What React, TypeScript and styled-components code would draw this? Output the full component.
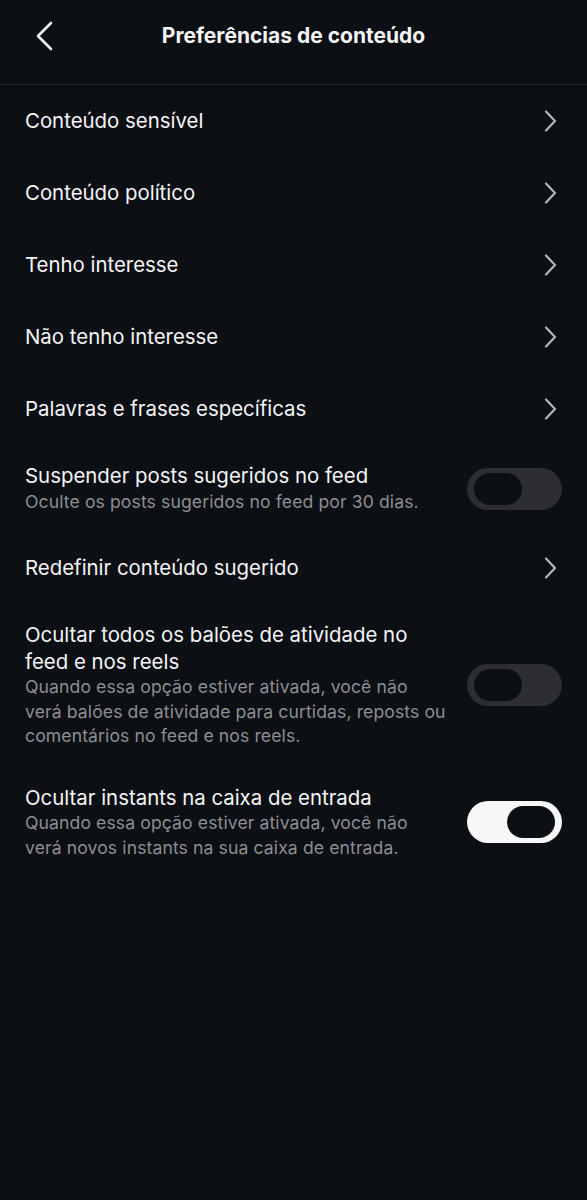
import React from "react";
import styled, { createGlobalStyle } from "styled-components";

const Global = createGlobalStyle`
  html, body { margin: 0; padding: 0; background: #0c0f14; }
  body { font-family: Inter, "Noto Sans", sans-serif; -webkit-font-smoothing: antialiased; }
`;

const Page = styled.div`
  width: 587px;
  min-height: 1200px;
  background: #0c0f14;
  color: #f5f5f7;
`;

const Header = styled.header`
  height: 85px;
  box-sizing: border-box;
  border-bottom: 1px solid #1f2228;
  display: grid;
  grid-template-columns: 80px 1fr 80px;
  align-items: start;
`;

const BackButton = styled.button`
  background: none;
  border: none;
  padding: 0;
  margin: 20px 0 0 32px;
  width: 24px;
  height: 32px;
  display: flex;
  align-items: center;
  justify-content: center;
  cursor: pointer;
`;

const Title = styled.h1`
  margin: 0;
  padding-top: 23px;
  text-align: center;
  font-size: 21px;
  line-height: 26px;
  font-weight: 700;
  letter-spacing: 0;
  color: #f5f5f7;
`;

const List = styled.div`
  display: flex;
  flex-direction: column;
`;

const Row = styled.div`
  min-height: 72px;
  box-sizing: border-box;
  padding: 18px 25px 18px 25px;
  display: flex;
  align-items: center;
  gap: 18px;
`;

const TextCol = styled.div`
  flex: 1;
  min-width: 0;
  display: flex;
  flex-direction: column;
`;

const Label = styled.div`
  font-size: 20.4px;
  line-height: 26.5px;
  color: #f5f5f7;
  letter-spacing: 0;
`;

const Sub = styled.div`
  font-size: 17.6px;
  line-height: 24.5px;
  color: #8d8e93;
  letter-spacing: 0.1px;
`;

const Track = styled.div<{ $on: boolean }>`
  flex: none;
  width: 95px;
  height: 42px;
  border-radius: 21px;
  background: ${(p) => (p.$on ? "#f7f7f7" : "#2c2e33")};
  display: flex;
  align-items: center;
  justify-content: ${(p) => (p.$on ? "flex-end" : "flex-start")};
  padding: 0 7px;
  box-sizing: border-box;
`;

const Knob = styled.div`
  width: 48px;
  height: 32px;
  border-radius: 16px;
  background: #0c0f14;
`;

const Chevron = () => (
  <svg width="16" height="24" viewBox="0 0 16 24" style={{ flex: "none", marginRight: 4 }}>
    <path d="M4 2.5 L13 12 L4 21.5" fill="none" stroke="#b4b5ba" strokeWidth="2.2" strokeLinecap="round" strokeLinejoin="round" />
  </svg>
);

type Item =
  | { kind: "link"; label: string }
  | { kind: "toggle"; label: string; sub: string; on: boolean };

const items: Item[] = [
  { kind: "link", label: "Conteúdo sensível" },
  { kind: "link", label: "Conteúdo político" },
  { kind: "link", label: "Tenho interesse" },
  { kind: "link", label: "Não tenho interesse" },
  { kind: "link", label: "Palavras e frases específicas" },
  {
    kind: "toggle",
    label: "Suspender posts sugeridos no feed",
    sub: "Oculte os posts sugeridos no feed por 30 dias.",
    on: false,
  },
  { kind: "link", label: "Redefinir conteúdo sugerido" },
  {
    kind: "toggle",
    label: "Ocultar todos os balões de atividade no feed e nos reels",
    sub: "Quando essa opção estiver ativada, você não verá balões de atividade para curtidas, reposts ou comentários no feed e nos reels.",
    on: false,
  },
  {
    kind: "toggle",
    label: "Ocultar instants na caixa de entrada",
    sub: "Quando essa opção estiver ativada, você não verá novos instants na sua caixa de entrada.",
    on: true,
  },
];

export default function App() {
  return (
    <Page>
      <Global />
      <Header>
        <BackButton aria-label="Voltar">
          <svg width="22" height="32" viewBox="0 0 22 32">
            <path d="M18 3 L5 16 L18 29" fill="none" stroke="#f5f5f7" strokeWidth="2.6" strokeLinecap="round" strokeLinejoin="round" />
          </svg>
        </BackButton>
        <Title>Preferências de conteúdo</Title>
        <div />
      </Header>
      <List>
        {items.map((it) =>
          it.kind === "link" ? (
            <Row key={it.label}>
              <TextCol>
                <Label>{it.label}</Label>
              </TextCol>
              <Chevron />
            </Row>
          ) : (
            <Row key={it.label}>
              <TextCol>
                <Label>{it.label}</Label>
                <Sub>{it.sub}</Sub>
              </TextCol>
              <Track $on={it.on}>
                <Knob />
              </Track>
            </Row>
          )
        )}
      </List>
    </Page>
  );
}
